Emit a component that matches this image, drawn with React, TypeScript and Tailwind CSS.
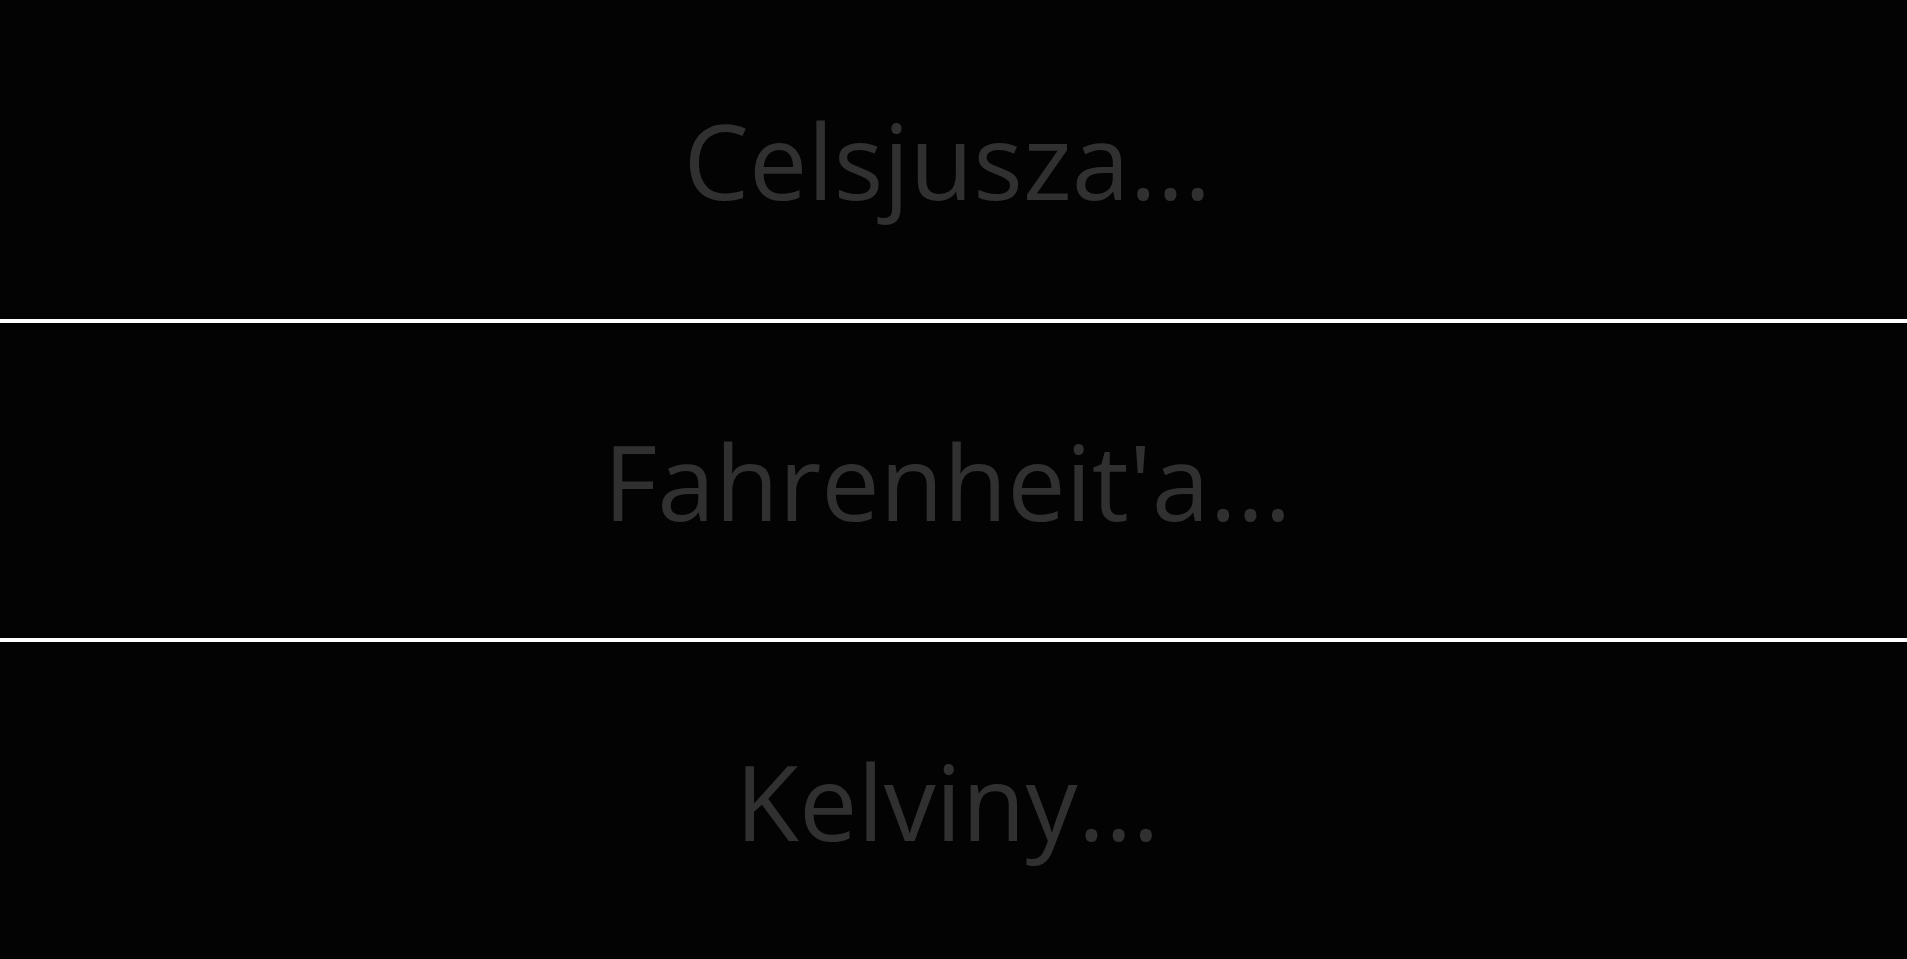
import React from 'react';

const rows = [
  { label: 'Celsjusza...', h: 'h-[319px]' },
  { label: "Fahrenheit'a...", h: 'h-[315px]' },
  { label: 'Kelviny...', h: 'flex-1' },
];

export default function App() {
  return (
    <div className="flex flex-col w-full h-[959px] bg-[#030303]" style={{ fontFamily: '"Open Sans", "Noto Sans", sans-serif' }}>
      {rows.map((row, i) => (
        <React.Fragment key={row.label}>
          {i > 0 && <div className="h-[4px] bg-white shrink-0" />}
          <div className={`${row.h} shrink-0 flex items-center justify-center pr-[12px]`}>
            <span className="text-[104px] leading-none text-[#303030]">{row.label}</span>
          </div>
        </React.Fragment>
      ))}
    </div>
  );
}
